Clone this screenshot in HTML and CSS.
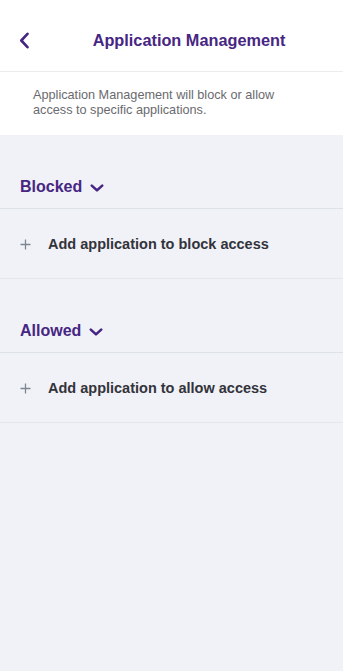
FILE: index.html
```html
<!DOCTYPE html>
<html lang="en">
<head>
<meta charset="utf-8">
<meta name="viewport" content="width=device-width, initial-scale=1">
<title>Application Management</title>
<link rel="stylesheet" href="styles.css">
</head>
<body>
<div class="screen">
  <header class="topbar">
    <button class="back" aria-label="Back">
      <svg width="11" height="17" viewBox="0 0 11 17"><path d="M8.5 1.8 L2.3 8.5 L8.5 15.2" fill="none" stroke="#472683" stroke-width="2.6" stroke-linecap="round" stroke-linejoin="round"/></svg>
    </button>
    <h1 class="title">Application Management</h1>
  </header>
  <div class="intro">
    <p>Application Management will block or allow access to specific applications.</p>
  </div>
  <main class="content">
    <section class="group">
      <div class="group-head">
        <span class="group-title">Blocked</span>
        <svg class="caret" width="14" height="8" viewBox="0 0 14 8"><path d="M1.8 1.6 L7 6.4 L12.2 1.6" fill="none" stroke="#472683" stroke-width="2.6" stroke-linecap="round" stroke-linejoin="round"/></svg>
      </div>
      <div class="add-row">
        <svg class="plus" width="11" height="11" viewBox="0 0 11 11"><path d="M5.5 0.5 V10.5 M0.5 5.5 H10.5" stroke="#7d8791" stroke-width="1.3"/></svg>
        <span class="add-label">Add application to block access</span>
      </div>
    </section>
    <section class="group">
      <div class="group-head">
        <span class="group-title">Allowed</span>
        <svg class="caret" width="14" height="8" viewBox="0 0 14 8"><path d="M1.8 1.6 L7 6.4 L12.2 1.6" fill="none" stroke="#472683" stroke-width="2.6" stroke-linecap="round" stroke-linejoin="round"/></svg>
      </div>
      <div class="add-row">
        <svg class="plus" width="11" height="11" viewBox="0 0 11 11"><path d="M5.5 0.5 V10.5 M0.5 5.5 H10.5" stroke="#7d8791" stroke-width="1.3"/></svg>
        <span class="add-label">Add application to allow access</span>
      </div>
    </section>
  </main>
</div>
</body>
</html>
```
FILE: styles.css
```css
* { box-sizing: border-box; }
html, body { margin: 0; padding: 0; }
body {
  font-family: "Liberation Sans", Arial, sans-serif;
  background: #f0f2f7;
  min-height: 100vh;
}
.screen { min-height: 100vh; display: flex; flex-direction: column; }
.topbar {
  background: #ffffff;
  height: 72px;
  padding-top: 9px;
  border-bottom: 1px solid #ececef;
  display: flex;
  align-items: center;
}
.back {
  width: 35px;
  padding: 0 0 0 19px;
  border: 0;
  background: none;
  display: flex;
  align-items: center;
  height: 20px;
}
.back svg { display: block; }
.title {
  flex: 1;
  margin: 0;
  text-align: center;
  font-size: 16.3px;
  line-height: 20px;
  font-weight: 700;
  color: #472683;
}
.intro {
  background: #ffffff;
  padding: 16px 33px 17px 33px;
}
.intro p {
  margin: 0;
  font-size: 12.7px;
  line-height: 15px;
  color: #6a6a6e;
}
.content { flex: 1; background: #f0f2f7; }
.group-head {
  padding: 42px 20px 11px 20px;
  border-bottom: 1px solid #dde1e8;
  display: flex;
  align-items: center;
  gap: 8px;
}
.group-title {
  font-size: 16px;
  line-height: 20px;
  font-weight: 700;
  color: #472683;
}
.caret { display: block; margin-top: 1px; }
.add-row {
  height: 70px;
  border-bottom: 1px solid #e3e6ec;
  display: flex;
  align-items: center;
  padding: 0 20px;
  gap: 17px;
}
.plus { display: block; margin-top: 1px; }
.add-label {
  font-size: 14.5px;
  line-height: 20px;
  font-weight: 700;
  color: #33333b;
}
```
